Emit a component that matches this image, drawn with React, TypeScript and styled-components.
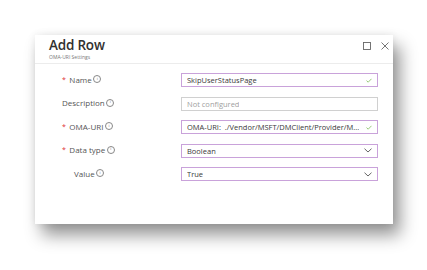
import styled, { createGlobalStyle } from 'styled-components';

const GlobalStyle = createGlobalStyle`
    html, body {
        margin: 0;
        padding: 0;
        background: #ffffff;
    }
    body {
        font-family: "Open Sans", "Noto Sans", "Liberation Sans", sans-serif;
    }
`;

const Page = styled.div`
    width: 427px;
    height: 270px;
    padding: 35px 0 0 35px;
    box-sizing: border-box;
`;

const Panel = styled.div`
    width: 358px;
    height: 189px;
    background: #fff;
    box-shadow: 7px 11px 16px rgba(0, 0, 0, 0.42), 0 0 8px rgba(0, 0, 0, 0.08);
    display: flex;
    flex-direction: column;
`;

const Header = styled.div`
    display: flex;
    justify-content: space-between;
    align-items: flex-start;
    padding: 2px 4px 0 14px;
    height: 26px;
    border-bottom: 1px solid #ececec;
`;

const Title = styled.div`
    font-size: 13.5px;
    font-weight: 600;
    color: #323130;
    line-height: 17px;
    letter-spacing: -0.2px;
`;

const Subtitle = styled.div`
    font-size: 5px;
    color: #777;
    line-height: 7px;
`;

const Actions = styled.div`
    display: flex;
    gap: 10px;
    padding-top: 5px;
`;

const Form = styled.div`
    display: flex;
    flex-direction: column;
    gap: 9.5px;
    padding: 9px 15px 0 0;
`;

const Row = styled.div`
    display: flex;
    align-items: center;
    height: 14px;
`;

const Label = styled.div<{ $indent: number }>`
    width: 146px;
    box-sizing: border-box;
    padding-left: ${p => p.$indent}px;
    font-size: 8px;
    color: #555;
    display: flex;
    align-items: center;
    gap: 1.5px;
    margin-top: -2px;
`;

const Star = styled.span`
    color: #e03030;
    font-size: 7px;
    margin-right: 2px;
`;

const Info = styled.span`
    display: inline-flex;
    align-items: center;
    justify-content: center;
    width: 6px;
    height: 6px;
    border: 0.7px solid #888;
    border-radius: 50%;
    font-size: 4.2px;
    color: #777;
    line-height: 1;
`;

const Field = styled.div<{ $active: boolean }>`
    width: 197px;
    height: 14px;
    box-sizing: border-box;
    border: 1px solid ${p => (p.$active ? '#c9a2da' : '#d0d0d0')};
    display: flex;
    align-items: center;
    justify-content: space-between;
    gap: 3px;
    padding: 0 5px 0 5px;
    font-size: 7.5px;
    color: ${p => (p.$active ? '#3a3a3a' : '#a0a0a0')};
    white-space: pre;
    overflow: hidden;

    & > span {
        min-width: 0;
        overflow: hidden;
    }
    & > svg {
        flex-shrink: 0;
    }
`;

const InfoIcon = () => <Info>i</Info>;

const Check = () => (
    <svg width="6" height="5" viewBox="0 0 6 5">
        <path d="M0.5 2.6 L2.2 4.2 L5.5 0.8" fill="none" stroke="#8cc46a" strokeWidth="0.9" />
    </svg>
);

const Chevron = () => (
    <svg width="8" height="5" viewBox="0 0 8 5">
        <path d="M0.5 0.7 L4 4 L7.5 0.7" fill="none" stroke="#555" strokeWidth="0.9" />
    </svg>
);

const MaxIcon = () => (
    <svg width="8" height="8" viewBox="0 0 8 8">
        <rect x="0.5" y="0.5" width="7" height="7" fill="none" stroke="#666" strokeWidth="0.9" />
    </svg>
);

const CloseIcon = () => (
    <svg width="8" height="8" viewBox="0 0 8 8">
        <path d="M0.5 0.5 L7.5 7.5 M7.5 0.5 L0.5 7.5" fill="none" stroke="#666" strokeWidth="0.9" />
    </svg>
);

type RowDef = {
    label: string;
    required: boolean;
    indent: number;
    value: string;
    active: boolean;
    end?: 'check' | 'chevron';
};

const rows: RowDef[] = [
    { label: 'Name', required: true, indent: 27, value: 'SkipUserStatusPage', active: true, end: 'check' },
    { label: 'Description', required: false, indent: 27, value: 'Not configured', active: false },
    { label: 'OMA-URI', required: true, indent: 27, value: 'OMA-URI:  ./Vendor/MSFT/DMClient/Provider/M...', active: true, end: 'check' },
    { label: 'Data type', required: true, indent: 27, value: 'Boolean', active: true, end: 'chevron' },
    { label: 'Value', required: false, indent: 39, value: 'True', active: true, end: 'chevron' },
];

export default function App() {
    return (
        <>
            <GlobalStyle />
            <Page>
                <Panel>
                    <Header>
                        <div>
                            <Title>Add Row</Title>
                            <Subtitle>OMA-URI Settings</Subtitle>
                        </div>
                        <Actions>
                            <MaxIcon />
                            <CloseIcon />
                        </Actions>
                    </Header>
                    <Form>
                        {rows.map(r => (
                            <Row key={r.label}>
                                <Label $indent={r.indent}>
                                    {r.required && <Star>*</Star>}
                                    <span>{r.label}</span>
                                    <InfoIcon />
                                </Label>
                                <Field $active={r.active}>
                                    <span>{r.value}</span>
                                    {r.end === 'check' && <Check />}
                                    {r.end === 'chevron' && <Chevron />}
                                </Field>
                            </Row>
                        ))}
                    </Form>
                </Panel>
            </Page>
        </>
    );
}
